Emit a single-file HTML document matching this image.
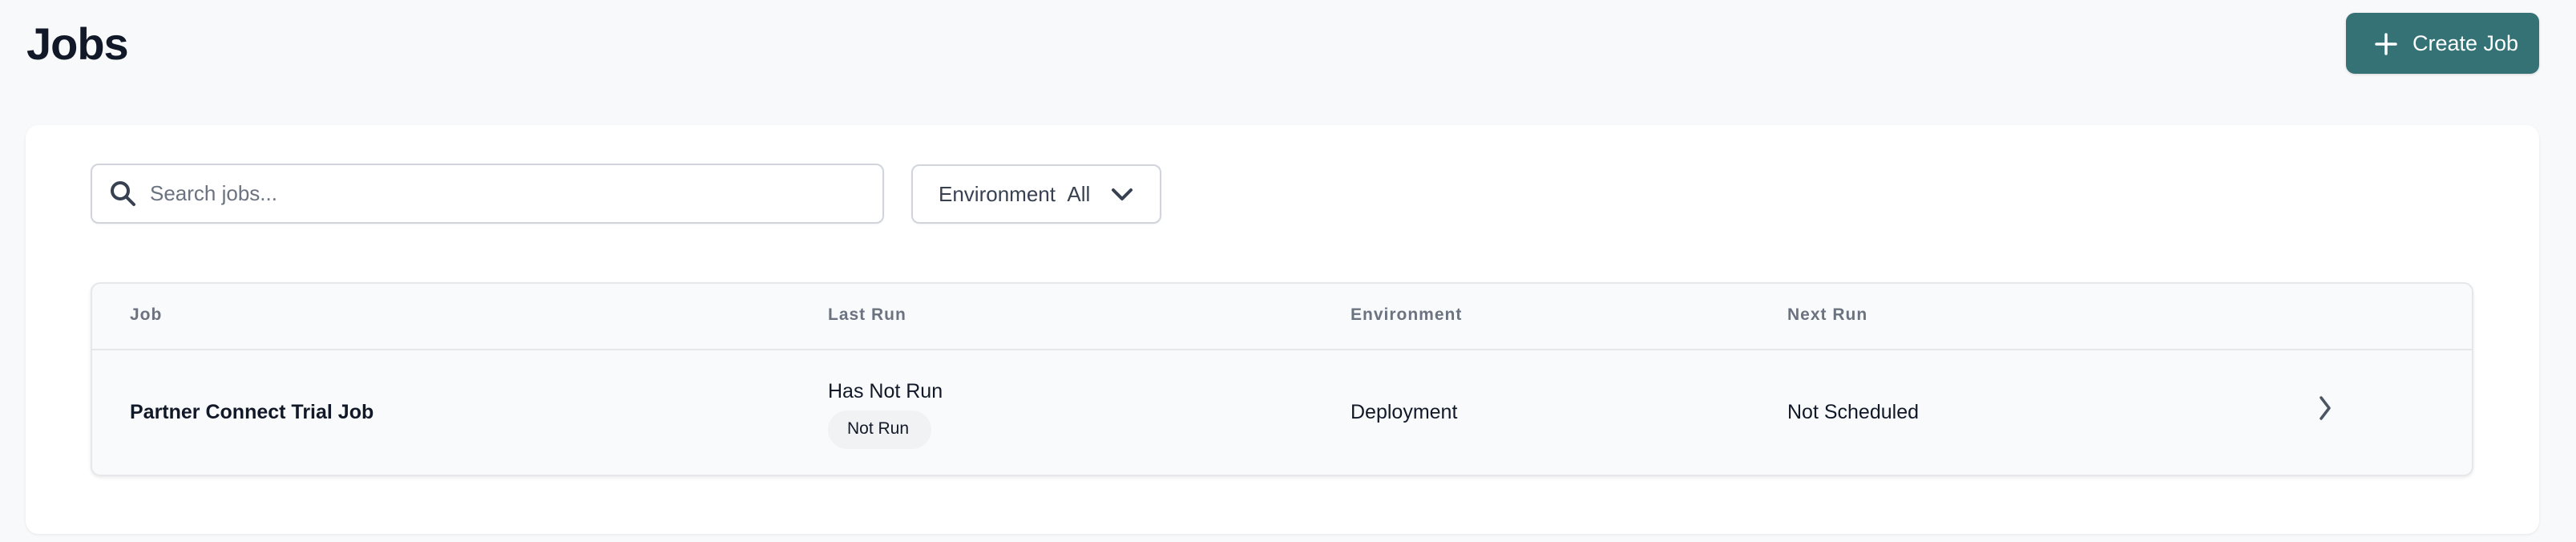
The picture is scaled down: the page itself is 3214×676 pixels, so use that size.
<!DOCTYPE html>
<html><head><style>
*{box-sizing:border-box;margin:0;padding:0}
body{width:3214px;height:676px;background:#f8f9fb;font-family:"Liberation Sans",sans-serif;position:relative;overflow:hidden;color:#111827}
.a{position:absolute;white-space:nowrap}
</style></head><body>
<div class="a" style="left:33px;top:22px;font-size:56px;font-weight:bold;letter-spacing:-1px;color:#111827">Jobs</div>
<div class="a" style="left:2927px;top:16px;width:241px;height:76px;background:#347275;border-radius:11px;box-shadow:0 1px 3px rgba(0,0,0,.15)">
<svg class="a" style="left:36px;top:25px" width="28" height="28" viewBox="0 0 28 28"><path d="M14 2V26M2 14H26" stroke="#fff" stroke-width="3.5" stroke-linecap="round"/></svg>
<div class="a" style="left:83px;top:23px;font-size:27px;color:#fff">Create Job</div>
</div>
<div class="a" style="left:32px;top:156px;width:3136px;height:510px;background:#fff;border-radius:16px;box-shadow:0 1px 3px rgba(0,0,0,.08)"></div>
<div class="a" style="left:113px;top:204px;width:990px;height:75px;border:2px solid #d1d5db;border-radius:10px;background:#fff;box-shadow:0 1px 2px rgba(0,0,0,.05)">
<svg class="a" style="left:21px;top:18px" width="36" height="36" viewBox="0 0 36 36"><circle cx="14" cy="14" r="10" fill="none" stroke="#374151" stroke-width="4"/><path d="M21.5 21.5L31 31" stroke="#374151" stroke-width="4" stroke-linecap="round"/></svg>
<div class="a" style="left:72px;top:20px;font-size:26px;color:#6b7280">Search jobs...</div>
</div>
<div class="a" style="left:1137px;top:205px;width:312px;height:74px;border:2px solid #d1d5db;border-radius:10px;background:#fff;box-shadow:0 1px 2px rgba(0,0,0,.05)">
<div class="a" style="left:32px;top:20px;font-size:26px;color:#374151">Environment&nbsp;&nbsp;All</div>
<svg class="a" style="left:246px;top:24px" width="30" height="24" viewBox="0 0 30 24"><path d="M4 6L15 17L26 6" fill="none" stroke="#374151" stroke-width="4" stroke-linecap="round" stroke-linejoin="round"/></svg>
</div>
<div class="a" style="left:113px;top:352px;width:2973px;height:242px;border:2px solid #e5e7eb;border-radius:12px;background:#f9fafb;box-shadow:0 2px 4px rgba(0,0,0,.08)">
<div class="a" style="left:0;top:81px;width:100%;height:2px;background:#e5e7eb"></div>
</div>
<div class="a" style="left:162px;top:381px;font-size:21px;font-weight:bold;color:#6b7280;letter-spacing:1px">Job</div>
<div class="a" style="left:1033px;top:381px;font-size:21px;font-weight:bold;color:#6b7280;letter-spacing:1px">Last Run</div>
<div class="a" style="left:1685px;top:381px;font-size:21px;font-weight:bold;color:#6b7280;letter-spacing:1px">Environment</div>
<div class="a" style="left:2230px;top:381px;font-size:21px;font-weight:bold;color:#6b7280;letter-spacing:1px">Next Run</div>
<div class="a" style="left:162px;top:500px;font-size:25px;font-weight:bold;color:#111827">Partner Connect Trial Job</div>
<div class="a" style="left:1033px;top:474px;font-size:25px;color:#111827">Has Not Run</div>
<div class="a" style="left:1033px;top:512px;width:129px;height:48px;border-radius:24px;background:#f1f2f4"></div>
<div class="a" style="left:1057px;top:523px;font-size:21px;color:#111827">Not Run</div>
<div class="a" style="left:1685px;top:500px;font-size:25px;color:#111827">Deployment</div>
<div class="a" style="left:2230px;top:500px;font-size:25px;color:#111827">Not Scheduled</div>
<svg class="a" style="left:2890px;top:493px" width="22" height="32" viewBox="0 0 22 32"><path d="M6 3L16 16L6 29" fill="none" stroke="#4b5563" stroke-width="3.5" stroke-linecap="round" stroke-linejoin="round"/></svg>
</body></html>
